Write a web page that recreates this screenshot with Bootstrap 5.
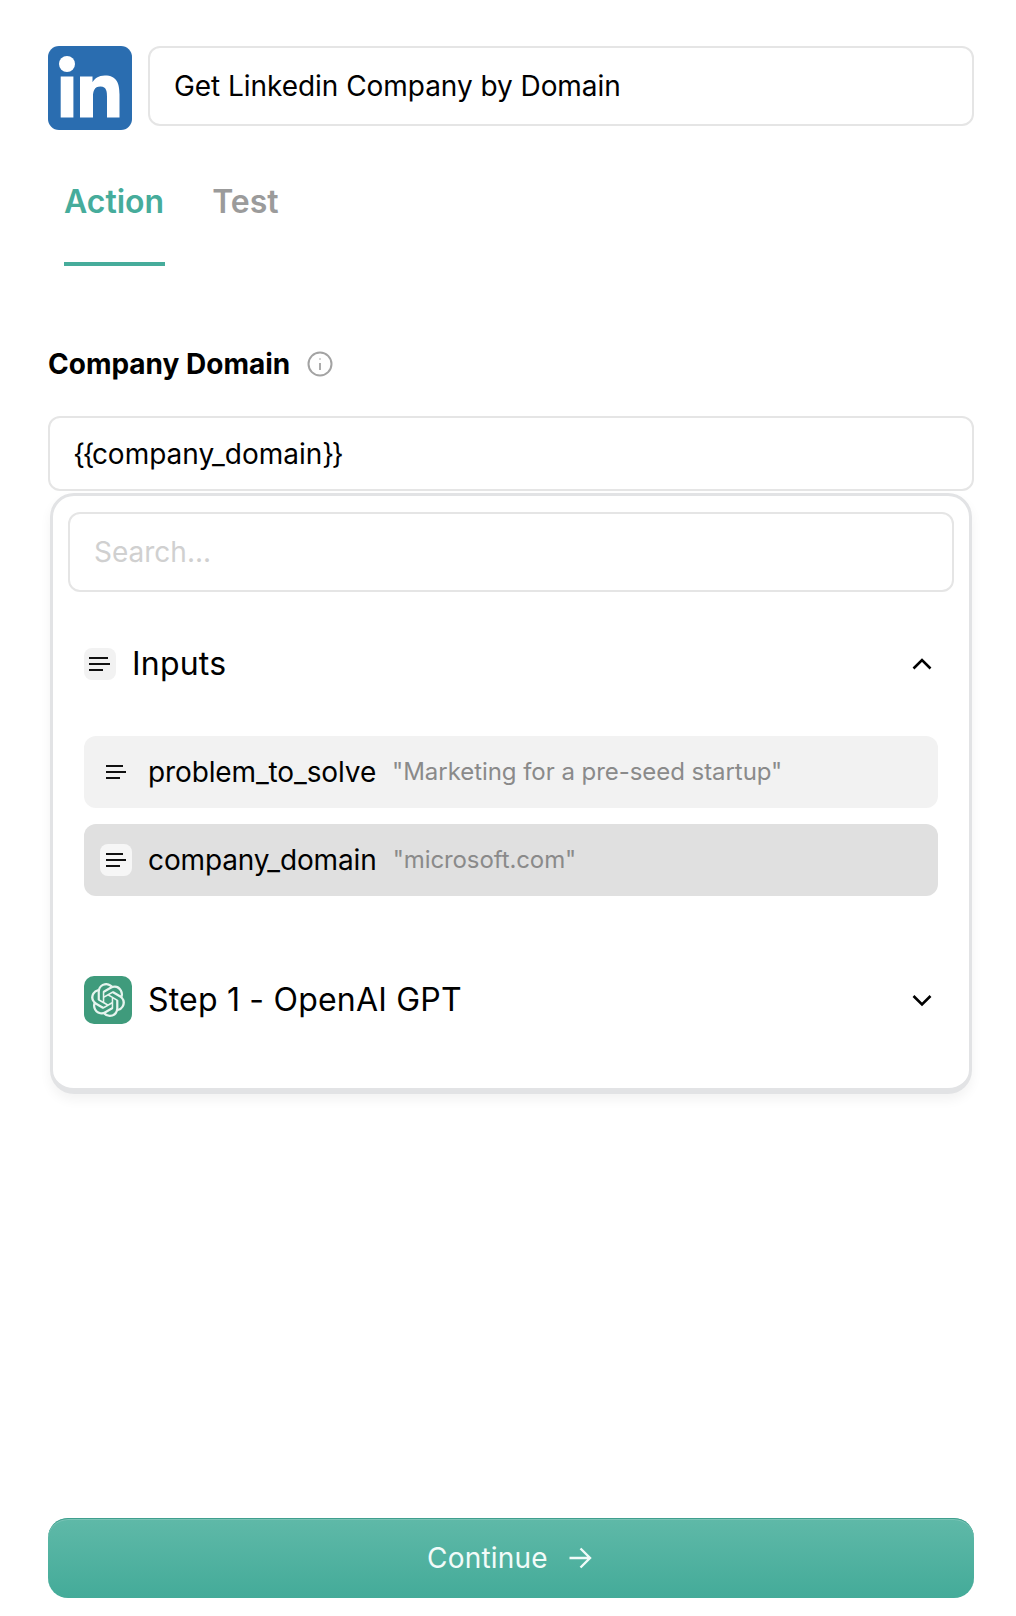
<!DOCTYPE html>
<html lang="en">
<head>
<meta charset="utf-8">
<title>Get Linkedin Company by Domain</title>
<link href="https://cdn.jsdelivr.net/npm/bootstrap@5.3.0/dist/css/bootstrap.min.css" rel="stylesheet">
<style>
html,body{height:100%}
body{font-family:Inter,"Liberation Sans",sans-serif;color:#000;background:#fff}
.shell{min-height:1616px;padding:46px 42px 18px 48px}
.logo-box{width:84px;height:84px;flex:none;display:block}
.field.form-control{font-size:28px;line-height:34px;color:#000;border:2px solid #e5e5e5;border-radius:12px;padding:0 24px;box-shadow:none}
.field.form-control::placeholder{color:#d0d0d0}
.title-field.form-control{height:80px;letter-spacing:-.05px}
.tabs-row{margin-top:44px;gap:47px;border:0}
.tabs-row .nav-link{font-size:32px;line-height:40px;font-weight:600;padding:8px 0 40px;color:#9b9b9b;border-radius:0;border:0;border-bottom:4px solid transparent;background:none}
.tabs-row .nav-link.active{color:#46ac9b;border-bottom-color:#46ac9b;padding-right:1px}
.label-row{margin-top:80px;gap:17px;height:36px}
.label-row .label-text{font-size:28px;font-weight:700;line-height:36px}
.domain-field.form-control{height:75px;margin-top:34px;display:flex;align-items:center;padding-left:23px}
.brace{letter-spacing:-2.500px}
.panel{margin:2px 2px 0;height:601px;background:#fff;border:3px solid #e2e3e5;border-bottom-width:6px;border-radius:24px;padding:16px 15px;box-shadow:0 6px 12px rgba(0,0,0,.05)}
.search-field.form-control{height:80px}
.group-head{margin:0 16px;height:48px;font-size:32px;line-height:40px;letter-spacing:.2px}
.head-one{margin-top:48px}
.head-two{margin-top:80px}
.icon-chip{width:32px;height:32px;flex:none;border-radius:8px;background:#f2f2f2;display:flex;align-items:center;justify-content:center}
.head-one .icon-chip{margin-right:16px}
.chev{margin-left:auto;margin-right:4px;width:24px;height:24px}
.var-list{margin:48px 16px 0;gap:16px}
.var-item{height:72px;border-radius:12px;background:#f2f2f2;padding:0 16px;font-size:28px;gap:16px}
.var-item.picked{background:#e0e0e0}
.var-item .icon-chip{background:transparent}
.var-item.picked .icon-chip{background:#f6f6f6}
.var-hint{font-size:24px;color:#8a8a8a;letter-spacing:-.05px}
.var-name-tight{letter-spacing:-.12px}
.var-item.picked .var-hint{letter-spacing:-.1px}
.oa-chip{width:48px;height:48px;flex:none;border-radius:10px;background:#3f9b7c;display:flex;align-items:center;justify-content:center;margin-right:16px}
.go-btn.btn{margin-top:auto;height:80px;width:100%;border-radius:20px;border:0;padding:0 3px 0 0;box-shadow:inset 0 1px #3f9f8e,inset 0 2px rgba(255,255,255,.18);background:linear-gradient(#5fb9a8,#44ab99);color:#f2fbf9;font-size:28px;letter-spacing:.2px;display:flex;align-items:center;justify-content:center;gap:20px}
</style>
</head>
<body>
<div class="shell d-flex flex-column">
  <div class="d-flex align-items-start gap-3">
    <svg class="logo-box" viewBox="0 0 84 84" role="img" aria-label="LinkedIn">
      <rect width="84" height="84" rx="11" fill="#2a6db0"/>
      <circle cx="19" cy="18" r="8" fill="#fff"/>
      <rect x="12.700" y="30.500" width="12.700" height="41" fill="#fff"/>
      <path d="M32 30.500h12.500v5.800c2-3.500 6-6.800 12.300-6.800 12.300 0 14.700 8.200 14.700 18.800v23.200H59V51c0-5-.2-10.500-6.500-10.500-6.400 0-7.500 5-7.500 10.300v20.700H32z" fill="#fff"/>
    </svg>
    <input class="form-control field title-field" type="text" value="Get Linkedin Company by Domain" aria-label="Action name">
  </div>

  <ul class="nav tabs-row ms-3 ps-0">
    <li class="nav-item"><a class="nav-link active" href="#">Action</a></li>
    <li class="nav-item"><a class="nav-link" href="#">Test</a></li>
  </ul>

  <div class="d-flex align-items-center label-row">
    <span class="label-text">Company Domain</span>
    <svg width="26" height="26" viewBox="0 0 26 26" fill="none" stroke="#a3a3a3" aria-hidden="true">
      <circle cx="13" cy="13" r="11.500" stroke-width="2"/>
      <path d="M13 12v7M13 7.500v1" stroke-width="1.800"/>
    </svg>
  </div>

  <div class="form-control field domain-field"><span class="brace">{{</span><span>company_domain</span><span class="brace">}}</span></div>

  <div class="panel">
    <input class="form-control field search-field" type="text" placeholder="Search..." aria-label="Search">

    <div class="d-flex align-items-center group-head head-one">
      <span class="icon-chip">
        <svg width="22" height="16" viewBox="0 0 22 16" stroke="#111" stroke-width="2" aria-hidden="true"><path d="M0 2h19M0 8h21M0 14h14"/></svg>
      </span>
      <span>Inputs</span>
      <svg class="chev" viewBox="0 0 24 24" fill="none" stroke="#000" stroke-width="2.600" aria-hidden="true"><path d="M3.500 16.500 12 8l8.500 8.500"/></svg>
    </div>

    <div class="d-flex flex-column var-list">
      <div class="d-flex align-items-center var-item">
        <span class="icon-chip">
          <svg width="22" height="16" viewBox="0 0 22 16" stroke="#111" stroke-width="2" aria-hidden="true"><path d="M1 2h17M1 8h20M1 14h14"/></svg>
        </span>
        <span class="var-name-tight">problem_to_solve</span>
        <span class="var-hint">"Marketing for a pre-seed startup"</span>
      </div>
      <div class="d-flex align-items-center var-item picked">
        <span class="icon-chip">
          <svg width="22" height="16" viewBox="0 0 22 16" stroke="#111" stroke-width="2" aria-hidden="true"><path d="M1 2h17M1 8h20M1 14h14"/></svg>
        </span>
        <span class="var-name-tight">company_domain</span>
        <span class="var-hint">"microsoft.com"</span>
      </div>
    </div>

    <div class="d-flex align-items-center group-head head-two">
      <span class="oa-chip">
        <svg width="34" height="34" viewBox="0 0 24 24" fill="#e6f4ee" aria-hidden="true"><path d="M22.2819 9.8211a5.9847 5.9847 0 0 0-.5157-4.9108 6.0462 6.0462 0 0 0-6.5098-2.9A6.0651 6.0651 0 0 0 4.9807 4.1818a5.9847 5.9847 0 0 0-3.9977 2.9 6.0462 6.0462 0 0 0 .7427 7.0966 5.98 5.98 0 0 0 .511 4.9107 6.051 6.051 0 0 0 6.5146 2.9001A5.9847 5.9847 0 0 0 13.2599 24a6.0557 6.0557 0 0 0 5.7718-4.2058 5.9894 5.9894 0 0 0 3.9977-2.9001 6.0557 6.0557 0 0 0-.7475-7.0729zm-9.022 12.6081a4.4755 4.4755 0 0 1-2.8764-1.0408l.1419-.0804 4.7783-2.7582a.7948.7948 0 0 0 .3927-.6813v-6.7369l2.02 1.1686a.071.071 0 0 1 .038.052v5.5826a4.504 4.504 0 0 1-4.4945 4.4944zm-9.6607-4.1254a4.4708 4.4708 0 0 1-.5346-3.0137l.142.0852 4.783 2.7582a.7712.7712 0 0 0 .7806 0l5.8428-3.3685v2.3324a.0804.0804 0 0 1-.0332.0615L9.74 19.9502a4.4992 4.4992 0 0 1-6.1408-1.6464zM2.3408 7.8956a4.485 4.485 0 0 1 2.3655-1.9728V11.6a.7664.7664 0 0 0 .3879.6765l5.8144 3.3543-2.0201 1.1685a.0757.0757 0 0 1-.071 0l-4.8303-2.7865A4.504 4.504 0 0 1 2.3408 7.872zm16.5963 3.8558L13.1038 8.364 15.1192 7.2a.0757.0757 0 0 1 .071 0l4.8303 2.7913a4.4944 4.4944 0 0 1-.6765 8.1042v-5.6772a.79.79 0 0 0-.407-.667zm2.0107-3.0231l-.142-.0852-4.7735-2.7818a.7759.7759 0 0 0-.7854 0L9.409 9.2297V6.8974a.0662.0662 0 0 1 .0284-.0615l4.8303-2.7866a4.4992 4.4992 0 0 1 6.6802 4.66zM8.3065 12.863l-2.02-1.1638a.0804.0804 0 0 1-.038-.0567V6.0742a4.4992 4.4992 0 0 1 7.3757-3.4537l-.142.0805L8.704 5.459a.7948.7948 0 0 0-.3927.6813zm1.0976-2.3654l2.602-1.4998 2.6069 1.4998v2.9994l-2.5974 1.4997-2.6067-1.4997Z"/></svg>
      </span>
      <span>Step 1 - OpenAI GPT</span>
      <svg class="chev" viewBox="0 0 24 24" fill="none" stroke="#000" stroke-width="2.600" aria-hidden="true"><path d="M3.500 8 12 16.500 20.500 8"/></svg>
    </div>
  </div>

  <button class="btn go-btn" type="button">
    <span>Continue</span>
    <svg width="24" height="24" viewBox="0 0 24 24" fill="none" stroke="#f2fbf9" stroke-width="2.400" aria-hidden="true"><path d="M1.500 12h20.500M12.500 2.500 22 12l-9.500 9.500"/></svg>
  </button>
</div>
<script src="https://cdn.jsdelivr.net/npm/bootstrap@5.3.0/dist/js/bootstrap.bundle.min.js"></script>
</body>
</html>
